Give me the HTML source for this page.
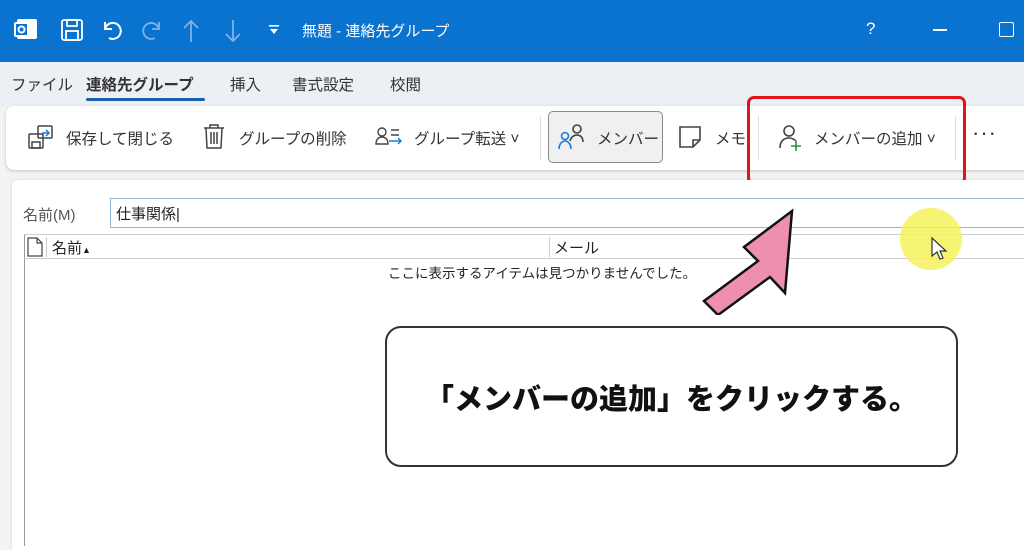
<!DOCTYPE html>
<html><head><meta charset="utf-8"><style>
body{margin:0;width:1024px;height:545px;overflow:hidden;background:#f3f3f3;font-family:"Liberation Sans","Noto Sans CJK JP",sans-serif;position:relative;color:#222}
.a{position:absolute;white-space:nowrap}
.tb{left:0;top:0;width:1024px;height:62px;background:#0a72cf}
.tabs{left:0;top:62px;width:1024px;height:44px;background:#eceff4}
.rib{left:6px;top:106px;width:1030px;height:64px;background:#fff;border-radius:8px;box-shadow:0 1px 3px rgba(0,0,0,.2)}
.t{font-size:15.5px;color:#333}
.w{color:#fff;font-size:15px}
</style></head><body>
<div class="a tb"></div>
<svg class="a" style="left:14px;top:17px" width="26" height="26" viewBox="0 0 26 26"><rect x="3" y="2" width="20" height="20" rx="2" fill="#fff"/><rect x="1" y="6" width="13" height="13" rx="1" fill="#0a72cf" stroke="#fff" stroke-width="2"/><circle cx="7.5" cy="12.5" r="3" fill="none" stroke="#fff" stroke-width="2"/></svg>
<svg class="a" style="left:60px;top:18px" width="24" height="24" fill="none" stroke="#fff" stroke-width="1.8"><rect x="2" y="2" width="20" height="20" rx="2"/><rect x="7" y="2" width="10" height="6"/><rect x="6" y="13" width="12" height="9"/></svg>
<svg class="a" style="left:100px;top:18px" width="24" height="24" fill="none" stroke="#fff" stroke-width="2"><path d="M5 4v7h7M5 11a8 8 0 1 1 4 9"/></svg>
<svg class="a" style="left:140px;top:18px" width="24" height="24" fill="none" stroke="#7fb3e6" stroke-width="1.8"><path d="M19 4v7h-7M19 11a8 8 0 1 0-4 9"/></svg>
<svg class="a" style="left:181px;top:18px" width="20" height="26" fill="none" stroke="#7fb3e6" stroke-width="1.8"><path d="M10 24V3M3 10l7-7 7 7"/></svg>
<svg class="a" style="left:223px;top:18px" width="20" height="26" fill="none" stroke="#7fb3e6" stroke-width="1.8"><path d="M10 2v21M3 16l7 7 7-7"/></svg>
<svg class="a" style="left:268px;top:24px" width="12" height="12" fill="#fff"><rect x="1" y="1" width="10" height="1.6"/><path d="M2 5h8l-4 5z"/></svg>
<div class="a w" style="left:302px;top:20px">無題 - 連絡先グループ</div>
<div class="a w" style="left:866px;top:19px;font-size:17px">?</div>
<div class="a" style="left:933px;top:29px;width:14px;height:1.5px;background:#fff"></div>
<div class="a" style="left:999px;top:22px;width:13px;height:13px;border:1.5px solid #fff;border-radius:2px"></div>

<div class="a tabs"></div>
<div class="a t" style="left:11px;top:73px">ファイル</div>
<div class="a t" style="left:86px;top:73px;font-weight:bold">連絡先グループ</div>
<div class="a" style="left:86px;top:98px;width:119px;height:3px;background:#1c5fae;border-radius:2px"></div>
<div class="a t" style="left:230px;top:73px">挿入</div>
<div class="a t" style="left:292px;top:73px">書式設定</div>
<div class="a t" style="left:390px;top:73px">校閲</div>

<div class="a rib"></div>
<svg class="a" style="left:28px;top:125px" width="26" height="26" fill="none" stroke="#444" stroke-width="1.5"><rect x="1" y="9" width="14" height="14" rx="1"/><rect x="4" y="17" width="8" height="6"/><rect x="10" y="1" width="14" height="12" rx="1"/><path d="M14 8h7M18 5l3 3-3 3" stroke="#1c7ad6"/></svg>
<div class="a t" style="left:66px;top:127px">保存して閉じる</div>
<svg class="a" style="left:203px;top:124px" width="22" height="26" fill="none" stroke="#444" stroke-width="1.5"><path d="M1 4h20M7 4V1h8v3M3 4l1 20h14l1-20M8 8v12M11 8v12M14 8v12"/></svg>
<div class="a t" style="left:239px;top:127px">グループの削除</div>
<svg class="a" style="left:375px;top:126px" width="30" height="24" fill="none" stroke="#444" stroke-width="1.4"><circle cx="7" cy="6" r="4"/><path d="M1 18c0-5 3-7 6-7s6 2 6 7zM16 4h8M16 9h8"/><path d="M14 15h12M23 12l3 3-3 3" stroke="#1c7ad6"/></svg>
<div class="a t" style="left:414px;top:127px">グループ転送 ˅</div>
<div class="a" style="left:540px;top:116px;width:1px;height:44px;background:#ddd"></div>
<div class="a" style="left:548px;top:111px;width:115px;height:52px;background:#f0f0f0;border:1.5px solid #8a8a8a;border-radius:5px;box-sizing:border-box"></div>
<svg class="a" style="left:557px;top:123px" width="32" height="28" fill="none" stroke-width="1.6"><circle cx="8" cy="13" r="3.5" stroke="#1c7ad6"/><path d="M2 26c0-5 3-8 6-8s6 3 6 8" stroke="#1c7ad6"/><circle cx="20" cy="6" r="4" stroke="#444"/><path d="M13 18c1-4 4-6 7-6s6 2 6 7" stroke="#444"/></svg>
<div class="a t" style="left:597px;top:127px">メンバー</div>
<svg class="a" style="left:678px;top:125px" width="24" height="24" fill="none" stroke="#444" stroke-width="1.6"><path d="M2 2h20v13l-7 7H2zM22 15h-7v7"/></svg>
<div class="a t" style="left:715px;top:127px">メモ</div>
<div class="a" style="left:758px;top:116px;width:1px;height:44px;background:#ddd"></div>
<svg class="a" style="left:778px;top:124px" width="28" height="28" fill="none" stroke-width="1.6"><circle cx="11" cy="7" r="5" stroke="#444"/><path d="M2 24c0-7 4-10 9-10 3 0 5 1 7 3" stroke="#444"/><path d="M18 17v10M13 22h10" stroke="#1a9a3a"/></svg>
<div class="a t" style="left:814px;top:127px">メンバーの追加 ˅</div>
<div class="a" style="left:955px;top:116px;width:1px;height:44px;background:#ddd"></div>
<div class="a" style="left:972px;top:120px;font-size:22px;color:#333;letter-spacing:1px">···</div>
<div class="a" style="left:747px;top:96px;width:219px;height:89px;border:3px solid #e0151b;border-radius:7px;box-sizing:border-box"></div>

<div class="a" style="left:12px;top:180px;width:1020px;height:370px;background:#fff;border-radius:6px 0 0 0;box-shadow:0 0 2px rgba(0,0,0,.15)"></div>
<div class="a" style="left:23px;top:204px;font-size:15px;color:#555">名前(M)</div>
<div class="a" style="left:110px;top:198px;width:920px;height:30px;border:1px solid #8fb6d9;box-sizing:border-box"></div>
<div class="a" style="left:116px;top:203px;font-size:15px;color:#222">仕事関係|</div>
<div class="a" style="left:24px;top:234px;width:1000px;height:311px;border-left:1px solid #999;border-top:1px solid #ccc"></div>
<div class="a" style="left:24px;top:258px;width:1000px;height:1px;background:#ccc"></div>
<svg class="a" style="left:27px;top:237px" width="16" height="20" fill="none" stroke="#444" stroke-width="1.2"><path d="M1 1h9l5 5v13H1zM10 1v5h5"/></svg>
<div class="a" style="left:46px;top:237px;width:1px;height:20px;background:#ccc"></div>
<div class="a" style="left:52px;top:237px;font-size:15px">名前<span style="font-size:9px">▲</span></div>
<div class="a" style="left:549px;top:237px;width:1px;height:20px;background:#ccc"></div>
<div class="a" style="left:554px;top:237px;font-size:15px">メール</div>
<div class="a" style="left:388px;top:262px;font-size:13.5px">ここに表示するアイテムは見つかりませんでした。</div>

<div class="a" style="left:900px;top:208px;width:62px;height:62px;border-radius:50%;background:#f6f25a;opacity:.85"></div>
<svg class="a" style="left:930px;top:236px" width="18" height="26"><path d="M2 2v18l5-4 3 7 3-1-3-7h6z" fill="#fff" stroke="#333" stroke-width="1.2"/></svg>
<svg class="a" style="left:700px;top:205px" width="100" height="110"><path d="M92 6L85 88 70 72 18 110 4 96 58 56 44 42z" fill="#ee8fb0" stroke="#111" stroke-width="2.5" stroke-linejoin="miter"/></svg>
<div class="a" style="left:385px;top:326px;width:573px;height:141px;border:2px solid #333;border-radius:16px;background:#fff;box-sizing:border-box"></div>
<div class="a" style="left:385px;top:376px;width:573px;text-align:center;font-size:29px;font-weight:900;color:#111;font-family:'Noto Sans CJK JP',sans-serif">「メンバーの追加」をクリックする。</div>
</body></html>
